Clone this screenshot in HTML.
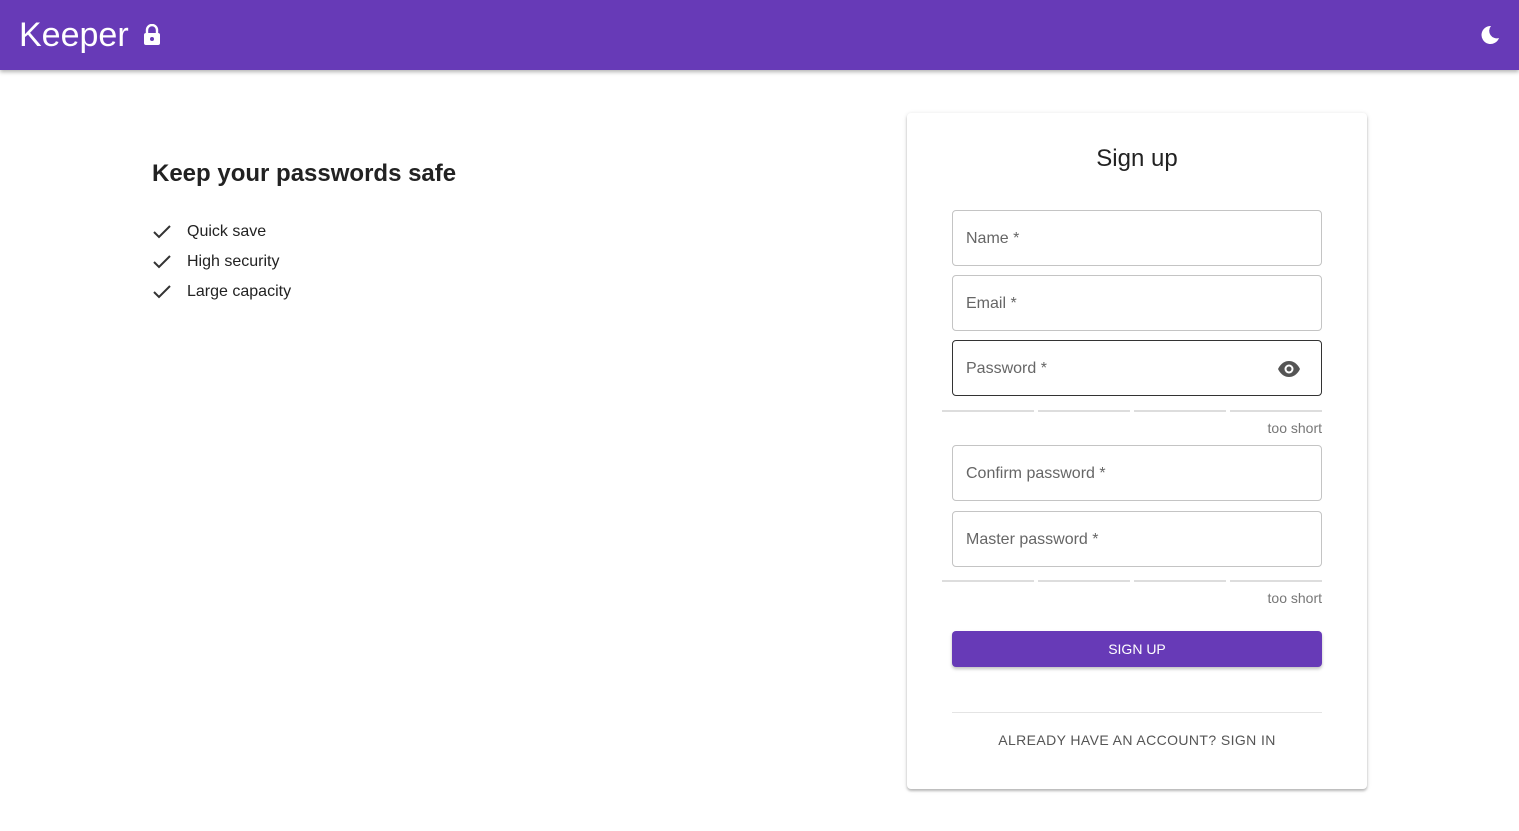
<!DOCTYPE html>
<html><head><style>
body{margin:0;width:1519px;height:831px;background:#fff;font-family:"Liberation Sans",Arial,sans-serif;position:relative;overflow:hidden}
.hdr{position:absolute;left:0;top:0;width:1519px;height:70px;background:#673ab7;box-shadow:0 2px 4px rgba(0,0,0,.3)}
.a{position:absolute;white-space:nowrap}
.fld{position:absolute;left:952px;width:368px;height:54px;border:1px solid #c4c4c4;border-radius:4px}
.fld span{position:absolute;left:13px;top:19px;font-size:16px;color:#666}
.bar{position:absolute;height:2px;background:#ddd;width:92px}
.ts{position:absolute;right:197px;font-size:14px;color:#777}
li{list-style:none;position:relative;height:30px;width:300px;font-size:16px;color:#222}
</style></head><body>
<div class="hdr">
<div class="a" style="left:19px;top:16px;font-size:34px;color:#fff">Keeper</div>
<svg class="a" style="left:143px;top:24px" width="18" height="22" viewBox="0 0 18 22"><path d="M4 9V6a5 5 0 0 1 10 0v3" fill="none" stroke="#fff" stroke-width="2.4"/><rect x="1" y="9" width="16" height="12" rx="2" fill="#fff"/><circle cx="9" cy="15" r="2" fill="#673ab7"/></svg>
<svg class="a" style="left:1480px;top:25px" width="20" height="20" viewBox="0 0 20 20"><path d="M11 1a9 9 0 1 0 8 12A7.5 7.5 0 0 1 11 1z" fill="#fff"/></svg>
</div>
<div class="a" style="left:152px;top:160px;font-size:24px;font-weight:bold;color:#222">Keep your passwords safe</div>
<ul class="a" style="left:152px;top:217px;margin:0;padding:0">
<li><svg class="a" style="left:1px;top:8px" width="18" height="14"><path d="M1 7l5 5L17 1" fill="none" stroke="#333" stroke-width="2"/></svg><span class="a" style="left:35px;top:6px">Quick save</span></li>
<li><svg class="a" style="left:1px;top:8px" width="18" height="14"><path d="M1 7l5 5L17 1" fill="none" stroke="#333" stroke-width="2"/></svg><span class="a" style="left:35px;top:6px">High security</span></li>
<li><svg class="a" style="left:1px;top:8px" width="18" height="14"><path d="M1 7l5 5L17 1" fill="none" stroke="#333" stroke-width="2"/></svg><span class="a" style="left:35px;top:6px">Large capacity</span></li>
</ul>
<div class="a" style="left:907px;top:113px;width:460px;height:676px;background:#fff;border-radius:4px;box-shadow:0 2px 2px rgba(0,0,0,.2),0 1px 5px rgba(0,0,0,.15)"></div>
<div class="a" style="left:907px;top:145px;width:460px;text-align:center;font-size:24px;color:#222">Sign up</div>
<div class="fld" style="top:210px"><span>Name *</span></div>
<div class="fld" style="top:275px"><span>Email *</span></div>
<div class="fld" style="top:340px;border-color:#333"><span>Password *</span>
<svg class="a" style="left:324px;top:19px" width="24" height="18" viewBox="0 0 24 18"><path d="M1 9C4 3 8 1 12 1s8 2 11 8c-3 6-7 8-11 8S4 15 1 9z" fill="#555"/><circle cx="12" cy="9" r="4.5" fill="#fff"/><circle cx="12" cy="9" r="2.5" fill="#555"/></svg></div>
<div class="bar" style="left:942px;top:410px"></div><div class="bar" style="left:1038px;top:410px"></div><div class="bar" style="left:1134px;top:410px"></div><div class="bar" style="left:1230px;top:410px"></div>
<div class="ts" style="top:420px">too short</div>
<div class="fld" style="top:445px"><span>Confirm password *</span></div>
<div class="fld" style="top:511px"><span>Master password *</span></div>
<div class="bar" style="left:942px;top:580px"></div><div class="bar" style="left:1038px;top:580px"></div><div class="bar" style="left:1134px;top:580px"></div><div class="bar" style="left:1230px;top:580px"></div>
<div class="ts" style="top:590px">too short</div>
<div class="a" style="left:952px;top:631px;width:370px;height:36px;background:#673ab7;border-radius:4px;box-shadow:0 2px 3px rgba(0,0,0,.25);color:#fff;font-size:14px;line-height:36px;text-align:center;font-weight:500">SIGN UP</div>
<div class="a" style="left:952px;top:712px;width:370px;height:1px;background:#e4e4e4"></div>
<div class="a" style="left:952px;top:732px;width:370px;text-align:center;font-size:14px;color:#555;letter-spacing:.4px">ALREADY HAVE AN ACCOUNT? SIGN IN</div>
</body></html>
